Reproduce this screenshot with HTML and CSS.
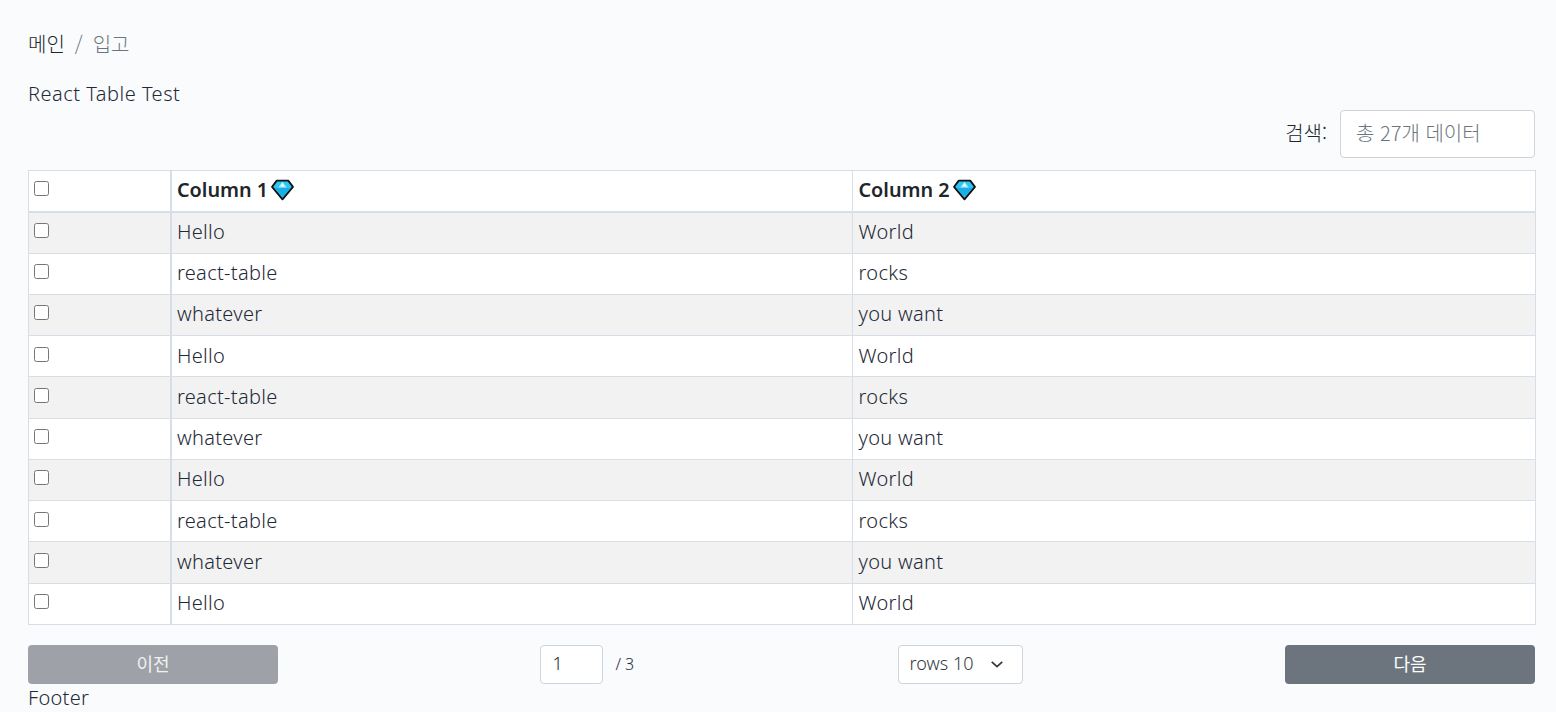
FILE: index.html
```html
<!DOCTYPE html>
<html lang="ko">
<head>
<meta charset="utf-8">
<title>React Table Test</title>
<link rel="stylesheet" href="styles.css">
</head>
<body>
<main class="page">
  <nav class="crumbs"><span class="crumb-main">메인</span><span class="crumb-sep">/</span><span class="crumb-cur">입고</span></nav>
  <div class="title">React Table Test</div>
  <div class="search"><label class="search-label" for="q">검색:</label><input id="q" class="search-input" type="text" placeholder="총 27개 데이터"></div>
  <table class="grid">
    <colgroup><col class="c0"><col class="c1"><col class="c2"></colgroup>
    <thead>
      <tr>
        <th class="chk"><input type="checkbox"></th>
        <th><span class="th-in">Column 1<svg class="gem" viewBox="0 0 22 22"><path d="M5.500 2.500h11l4.500 6L11 20.500 1 8.500z" fill="#2cc6f4" stroke="#111" stroke-width="1.700" stroke-linejoin="round"/><path d="M7 9l4-5.500L15 9z" fill="#a8ecfb"/><path d="M9.500 8l1.500-3 1.500 3z" fill="#fff"/><path d="M3.500 9.500H18.500L11 18z" fill="#18aee8"/></svg></span></th>
        <th><span class="th-in">Column 2<svg class="gem" viewBox="0 0 22 22"><path d="M5.500 2.500h11l4.500 6L11 20.500 1 8.500z" fill="#2cc6f4" stroke="#111" stroke-width="1.700" stroke-linejoin="round"/><path d="M7 9l4-5.500L15 9z" fill="#a8ecfb"/><path d="M9.500 8l1.500-3 1.500 3z" fill="#fff"/><path d="M3.500 9.500H18.500L11 18z" fill="#18aee8"/></svg></span></th>
      </tr>
    </thead>
    <tbody>
      <tr><td class="chk"><input type="checkbox"></td><td>Hello</td><td>World</td></tr>
      <tr><td class="chk"><input type="checkbox"></td><td>react-table</td><td>rocks</td></tr>
      <tr><td class="chk"><input type="checkbox"></td><td>whatever</td><td>you want</td></tr>
      <tr><td class="chk"><input type="checkbox"></td><td>Hello</td><td>World</td></tr>
      <tr><td class="chk"><input type="checkbox"></td><td>react-table</td><td>rocks</td></tr>
      <tr><td class="chk"><input type="checkbox"></td><td>whatever</td><td>you want</td></tr>
      <tr><td class="chk"><input type="checkbox"></td><td>Hello</td><td>World</td></tr>
      <tr><td class="chk"><input type="checkbox"></td><td>react-table</td><td>rocks</td></tr>
      <tr><td class="chk"><input type="checkbox"></td><td>whatever</td><td>you want</td></tr>
      <tr><td class="chk"><input type="checkbox"></td><td>Hello</td><td>World</td></tr>
    </tbody>
  </table>
  <div class="pager">
    <button class="btn btn-off" type="button">이전</button>
    <div class="pages"><input class="page-input" type="text" value="1"><span class="page-total">/ 3</span></div>
    <div class="rows"><span>rows 10</span><svg class="chev" viewBox="0 0 16 16"><path d="M2 5.500L8 11l6-5.500" fill="none" stroke="#343a40" stroke-width="2"/></svg></div>
    <button class="btn" type="button">다음</button>
  </div>
  <div class="footer">Footer</div>
</main>
</body>
</html>
```
FILE: styles.css
```css
* { box-sizing: border-box; }
html, body { margin: 0; height: 100%; overflow: hidden; }
body {
  background: #f9fbfd;
  color: #1f2a37;
  font-family: "Noto Sans", "Noto Sans CJK KR", sans-serif;
  font-size: 16px;
  font-weight: 400;
  line-height: 24px;
}
.page { padding: 32px 21px 0 28px; }
.crumbs { display: flex; align-items: center; height: 24px; gap: 10px; font-family: "Noto Sans CJK KR", "Noto Sans", sans-serif; font-weight: 300; font-size: 20px; }
.crumb-main { color: #212529; }
.crumb-sep, .crumb-cur { color: #6c757d; }
.title { margin-top: 26px; height: 24px; font-size: 20px; font-weight: 300; letter-spacing: 0.5px; }
.search { display: flex; justify-content: flex-end; align-items: center; gap: 13px; margin-top: 4px; height: 48px; }
.search-label { margin-bottom: 2px; font-family: "Noto Sans CJK KR", sans-serif; font-weight: 300; font-size: 20px; color: #212529; }
.search-input {
  width: 195px; height: 48px; padding: 0 15px 3px; background: #fff;
  border: 1px solid #ced4da; border-radius: 4px;
  font-family: "Noto Sans CJK KR", sans-serif; font-weight: 300; font-size: 20px; color: #495057;
}
.search-input::placeholder { color: #6c757d; opacity: 1; }
.grid { width: 1507px; margin-top: 12px; border-collapse: collapse; table-layout: fixed; background: #fff; }
.c0 { width: 142.500px; }
.c1 { width: 681.500px; }
.c2 { width: 683px; }
.grid th, .grid td { border: 1px solid #d6dfe8; padding: 0 5px 1.500px; height: 41.25px; text-align: left; vertical-align: middle; font-size: 20px; line-height: 24px; font-weight: 300; letter-spacing: 0.3px; }
.grid th:last-child, .grid td:last-child { padding-left: 5.500px; }
.grid th { height: 41.4px; padding-bottom: 2px; border-bottom-width: 2px; font-size: 19.800px; font-weight: 600; color: #212529; letter-spacing: 0; }
.grid .chk { padding: 0 0 4.500px 5px; border-right-width: 2px; }
.grid th.chk { padding-bottom: 5px; }
.grid tbody tr:nth-child(odd) { background: #f2f2f2; }
.chk input { display: block; width: 15px; height: 15px; margin: 0; }
.th-in { display: inline-flex; align-items: center; gap: 3px; }
.gem { width: 23px; height: 23px; display: block; }
.pager { display: flex; justify-content: space-between; align-items: center; margin-top: 20px; height: 39px; }
.btn {
  width: 250px; height: 39px; padding: 0 0 3px; border: 0; border-radius: 4px; background: #6c757d; color: #fff;
  font-family: "Noto Sans CJK KR", sans-serif; font-size: 18px; font-weight: 400;
}
.btn-off { background: #9ea2a8; color: #f1f1f1; }
.pages { display: flex; align-items: center; gap: 12px; }
.page-input {
  width: 63px; height: 39px; padding: 0 11px 3px; background: #fff; border: 1px solid #ced4da; border-radius: 4px;
  font-family: "Noto Sans", sans-serif; font-size: 18px; font-weight: 300; color: #212529;
}
.page-total { margin: 0 1px 1px 0; font-size: 16px; font-weight: 300; }
.rows {
  display: flex; align-items: center; justify-content: space-between;
  width: 125px; height: 39px; padding: 0 18px 2px 11px; background: #fff; border: 1px solid #ced4da; border-radius: 4px;
  font-size: 18px; font-weight: 300; color: #343a40;
}
.chev { width: 14px; height: 14px; display: block; margin-top: 2px; }
.footer { height: 24px; margin-top: 2px; font-size: 20px; font-weight: 300; letter-spacing: 0.3px; }
```
